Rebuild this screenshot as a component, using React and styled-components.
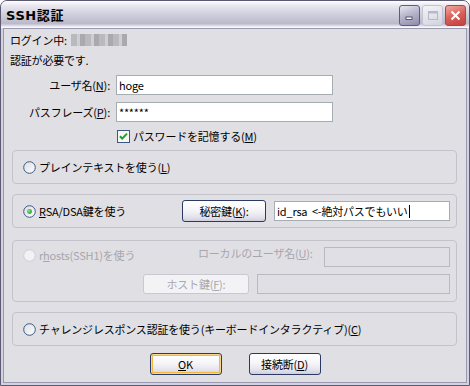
import React from "react";
import styled, { createGlobalStyle, css } from "styled-components";

const GlobalStyle = createGlobalStyle`
  html, body {
    margin: 0;
    padding: 0;
    background: #ffffff;
  }
  body {
    font-family: "Noto Sans CJK JP", "DejaVu Sans", sans-serif;
    font-size: 11px;
  }
`;

const FONT = `"Noto Sans CJK JP", "DejaVu Sans", sans-serif`;

const Window = styled.div`
  width: 470px;
  height: 386px;
  box-sizing: border-box;
  border: 1px solid #5b5a72;
  border-radius: 7px 7px 0 0;
  background: #d3d2df;
  padding: 0 2px 2px;
  display: flex;
  flex-direction: column;
  overflow: hidden;
`;

const TitleBar = styled.div`
  height: 27px;
  margin: 0 -2px;
  padding: 4px 3px 0 5px;
  box-sizing: border-box;
  display: flex;
  justify-content: space-between;
  align-items: flex-start;
  background: linear-gradient(
    180deg,
    #ffffff 0%,
    #ecebf2 14%,
    #d6d5e1 40%,
    #c3c2d3 70%,
    #bbbacb 84%,
    #e4e4ec 93%,
    #ffffff 100%
  );
`;

const Title = styled.div`
  font-family: "DejaVu Sans", "Noto Sans CJK JP", sans-serif;
  font-weight: 700;
  font-size: 13px;
  line-height: 20px;
  color: #000;
  letter-spacing: 0.6px;
  padding-top: 1px;
`;

const TitleButtons = styled.div`
  display: flex;
  gap: 2px;
`;

const TitleBtn = styled.div`
  width: 21px;
  height: 21px;
  box-sizing: border-box;
  border-radius: 3px;
  display: flex;
  align-items: center;
  justify-content: center;
  ${({ kind }) =>
    kind === "min" &&
    css`
      border: 1px solid #5d5c7a;
      background: linear-gradient(160deg, #e8e8f0 0%, #b7b6cb 45%, #8e8daa 100%);
    `}
  ${({ kind }) =>
    kind === "max" &&
    css`
      border: 1px solid #c3c2d2;
      background: linear-gradient(160deg, #f4f4f8 0%, #e0e0e8 60%, #d2d2de 100%);
    `}
  ${({ kind }) =>
    kind === "close" &&
    css`
      border: 1px solid #a34a4a;
      background: linear-gradient(160deg, #f1a7a0 0%, #d9605a 50%, #c2403c 100%);
    `}
`;

const Client = styled.div`
  flex: 1;
  border: 1px solid #9998ae;
  background: #e0dfe3;
  padding: 1px 0 0;
  display: flex;
  flex-direction: column;
  font-family: ${FONT};
  font-size: 11px;
  letter-spacing: -0.2px;
  color: #000;
`;

const InfoLine = styled.div`
  height: 20px;
  line-height: 20px;
  padding-left: 6px;
  display: flex;
  align-items: center;
  gap: 4px;
`;

const Masked = styled.span`
  display: inline-block;
  width: 56px;
  height: 12px;
  background: repeating-linear-gradient(
    90deg,
    #b9b9be 0px,
    #b9b9be 6px,
    #cfcfd3 6px,
    #cfcfd3 9px,
    #a9a9ae 9px,
    #a9a9ae 14px
  );
  filter: blur(0.6px);
`;

const FormGrid = styled.div`
  margin-top: 5px;
  display: grid;
  grid-template-columns: 106px 217px;
  column-gap: 6px;
  row-gap: 7px;
  align-items: center;
`;

const FieldLabel = styled.div`
  text-align: right;
  white-space: nowrap;
`;

const Field = styled.div`
  height: 20px;
  box-sizing: border-box;
  border: 1px solid ${({ disabled }) => (disabled ? "#b9b9c2" : "#a5acb2")};
  background: ${({ disabled }) => (disabled ? "#e0dfe3" : "#ffffff")};
  padding: 0 2px;
  line-height: 18px;
  white-space: pre;
  overflow: hidden;
  ${({ width }) => (width ? `width: ${width}px; flex: none;` : "flex: 1;")}
  ${({ offset }) => offset && `margin-left: ${offset}px;`}
`;

const Caret = styled.span`
  display: inline-block;
  width: 1px;
  height: 13px;
  background: #000;
  vertical-align: -2px;
  margin-left: 1px;
`;

const CheckRow = styled.label`
  margin: 7px 0 0 113px;
  height: 14px;
  display: flex;
  align-items: center;
  gap: 3px;
`;

const Group = styled.div`
  margin: ${({ top }) => top}px 9px 0 8px;
  box-sizing: border-box;
  height: ${({ h }) => h}px;
  border: 1px solid #c4c3cb;
  border-radius: 4px;
  padding: ${({ pad }) => pad || "0 6px 0 10px"};
  display: flex;
  flex-direction: ${({ column }) => (column ? "column" : "row")};
  align-items: ${({ column }) => (column ? "stretch" : "center")};
`;

const RadioLabel = styled.div`
  display: flex;
  align-items: center;
  gap: 3px;
  white-space: nowrap;
  color: ${({ disabled }) => (disabled ? "#a7a6ad" : "#000")};
  ${({ grow }) => grow && "flex: 1;"}
  ${({ width }) => width && `width: ${width}px;`}
`;

const GroupRow = styled.div`
  display: flex;
  align-items: ${({ align }) => align || "center"};
  height: 20px;
  margin-top: ${({ top }) => top || 0}px;
  padding-left: ${({ indent }) => indent || 0}px;
  gap: ${({ gap }) => gap || 0}px;
`;

const PlainLabel = styled.div`
  white-space: nowrap;
  line-height: 12px;
  color: ${({ disabled }) => (disabled ? "#a7a6ad" : "#000")};
  ${({ width }) => width && `width: ${width}px;`}
`;

const Button = styled.div`
  box-sizing: border-box;
  width: ${({ width }) => width}px;
  height: ${({ h }) => h || 22}px;
  border-radius: 3px;
  display: flex;
  align-items: center;
  justify-content: center;
  white-space: nowrap;
  border: 1px solid #2b3a63;
  background: linear-gradient(180deg, #ffffff 0%, #f6f6f9 45%, #e4e3ec 80%, #cfcede 100%);
  ${({ isDefault }) =>
    isDefault &&
    css`
      box-shadow: inset 0 0 0 1px #fbd68b, inset 0 0 0 2px #f3b63e;
    `}
  ${({ disabled }) =>
    disabled &&
    css`
      border-color: #c9c8d0;
      background: #f3f3f5;
      color: #a7a6ad;
    `}
`;

const ButtonRow = styled.div`
  margin-top: 7px;
  display: flex;
  justify-content: center;
  gap: 27px;
`;

const Radio = ({ checked, disabled }) => (
  <svg width="13" height="13" viewBox="0 0 13 13">
    <defs>
      <linearGradient id="rg" x1="0" y1="0" x2="1" y2="1">
        <stop offset="0" stopColor="#dcdce4" />
        <stop offset="1" stopColor="#ffffff" />
      </linearGradient>
      <radialGradient id="dot" cx="0.4" cy="0.4" r="0.6">
        <stop offset="0" stopColor="#8fe88a" />
        <stop offset="1" stopColor="#1e9b1e" />
      </radialGradient>
    </defs>
    <circle
      cx="6.5"
      cy="6.5"
      r="5.8"
      fill={disabled ? "#f2f2f4" : "url(#rg)"}
      stroke={disabled ? "#cfced6" : "#3d5980"}
      strokeWidth="1"
    />
    {checked && <circle cx="6.5" cy="6.5" r="2.4" fill="url(#dot)" />}
  </svg>
);

const Checkbox = () => (
  <svg width="13" height="13" viewBox="0 0 13 13">
    <rect x="0.5" y="0.5" width="12" height="12" fill="#f6f6f8" stroke="#3d5980" />
    <path d="M3 6.2 L5.2 8.6 L10 3.6" fill="none" stroke="#21a121" strokeWidth="2" />
  </svg>
);

const App = () => {
  return (
    <>
      <GlobalStyle />
      <Window>
        <TitleBar>
          <Title>SSH認証</Title>
          <TitleButtons>
            <TitleBtn kind="min">
              <svg width="13" height="13" viewBox="0 0 13 13">
                <rect x="3" y="8" width="6" height="2.5" fill="#ffffff" stroke="#3b3a58" strokeWidth="0.8" />
              </svg>
            </TitleBtn>
            <TitleBtn kind="max">
              <svg width="13" height="13" viewBox="0 0 13 13">
                <rect x="2.5" y="2.5" width="9" height="8" fill="none" stroke="#b9b8c8" strokeWidth="1" />
                <rect x="2.5" y="2.5" width="9" height="2" fill="#b9b8c8" />
              </svg>
            </TitleBtn>
            <TitleBtn kind="close">
              <svg width="13" height="13" viewBox="0 0 13 13">
                <path d="M2.5 2.5 L10.5 10.5 M10.5 2.5 L2.5 10.5" stroke="#ffffff" strokeWidth="2" />
              </svg>
            </TitleBtn>
          </TitleButtons>
        </TitleBar>
        <Client>
          <InfoLine>
            ログイン中: <Masked />
          </InfoLine>
          <InfoLine>認証が必要です.</InfoLine>
          <FormGrid>
            <FieldLabel>
              ユーザ名(<u>N</u>):
            </FieldLabel>
            <Field>hoge</Field>
            <FieldLabel>
              パスフレーズ(<u>P</u>):
            </FieldLabel>
            <Field>******</Field>
          </FormGrid>
          <CheckRow>
            <Checkbox />
            <span>
              パスワードを記憶する(<u>M</u>)
            </span>
          </CheckRow>

          <Group top={7} h={34}>
            <RadioLabel>
              <Radio />
              <span>
                プレインテキストを使う(<u>L</u>)
              </span>
            </RadioLabel>
          </Group>

          <Group top={10} h={34}>
            <RadioLabel grow>
              <Radio checked />
              <span>
                <u>R</u>SA/DSA鍵を使う
              </span>
            </RadioLabel>
            <Button width={84} h={22}>
              秘密鍵(<u>K</u>):
            </Button>
            <Field width={176} offset={8}>
              {"id_rsa  <-絶対パスでもいい"}
              <Caret />
            </Field>
          </Group>

          <Group top={12} h={62} column pad="6px 6px 0 10px">
            <GroupRow align="flex-start">
              <RadioLabel width={175} disabled>
                <Radio disabled />
                <span>
                  r<u>h</u>osts(SSH1)を使う
                </span>
              </RadioLabel>
              <PlainLabel width={126} disabled>
                ローカルのユーザ名(<u>U</u>):
              </PlainLabel>
              <Field disabled />
            </GroupRow>
            <GroupRow top={7} indent={120} gap={8}>
              <Button width={106} h={20} disabled>
                ホスト鍵(<u>F</u>):
              </Button>
              <Field disabled />
            </GroupRow>
          </Group>

          <Group top={10} h={34}>
            <RadioLabel>
              <Radio />
              <span>
                チャレンジレスポンス認証を使う(キーボードインタラクティブ)(<u>C</u>)
              </span>
            </RadioLabel>
          </Group>

          <ButtonRow>
            <Button width={72} isDefault>
              <span>
                <u>O</u>K
              </span>
            </Button>
            <Button width={72}>
              接続断(<u>D</u>)
            </Button>
          </ButtonRow>
        </Client>
      </Window>
    </>
  );
};

export default App;
